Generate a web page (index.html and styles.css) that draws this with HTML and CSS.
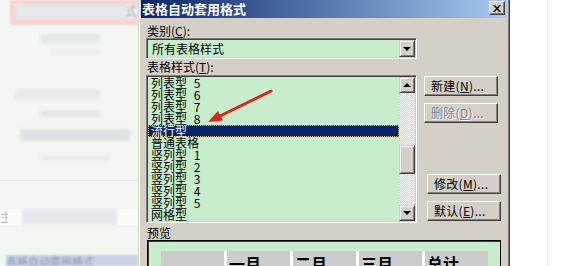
FILE: index.html
```html
<!DOCTYPE html>
<html lang="zh-CN">
<head>
<meta charset="utf-8">
<title>表格自动套用格式</title>
<link rel="stylesheet" href="styles.css">
</head>
<body>
<div class="page">
  <div class="backdrop">
    <div class="bd-toolbar"><div class="bd-toolbar-inner"><span class="bd-chip">式</span></div></div>
    <div class="bd-block b1"></div>
    <div class="bd-block b2"></div>
    <div class="bd-block b3"></div>
    <div class="bd-block b4"></div>
    <div class="bd-block b5"></div>
    <div class="bd-block b6"></div>
    <div class="bd-rule"></div>
    <div class="bd-textrow"><span class="bd-glyph">主</span><span class="bd-block b7"></span></div>
    <div class="bd-bottom">表格自动套用格式</div>
  </div>

  <div class="dialog">
    <div class="dialog-inner">
      <div class="titlebar">
        <span class="title">表格自动套用格式</span>
        <span class="close-btn">
          <svg width="8" height="7" viewBox="0 0 8 7"><path d="M0 0h2l2 2.5L6 0h2L5 3.5 8 7H6L4 4.5 2 7H0l3-3.5z" fill="#000"/></svg>
        </span>
      </div>
      <div class="content">
        <div class="row">
          <div class="main-col">
            <div class="label">类别(<u>C</u>):</div>
            <div class="combo">
              <span class="combo-text">所有表格样式</span>
              <span class="sb-btn arrow-down"></span>
            </div>
            <div class="label label-list">表格样式(<u>T</u>):</div>
            <div class="listbox">
              <ul class="items">
                <li>列表型 5</li>
                <li>列表型 6</li>
                <li>列表型 7</li>
                <li>列表型 8</li>
                <li class="selected">流行型</li>
                <li>普通表格</li>
                <li>竖列型 1</li>
                <li>竖列型 2</li>
                <li>竖列型 3</li>
                <li>竖列型 4</li>
                <li>竖列型 5</li>
                <li>网格型</li>
              </ul>
              <div class="scrollbar">
                <span class="sb-btn arrow-up"></span>
                <div class="track"><div class="thumb"></div></div>
                <span class="sb-btn arrow-down"></span>
              </div>
            </div>
          </div>
          <div class="btn-col">
            <div class="btn">新建(<u>N</u>)...</div>
            <div class="btn disabled">删除(<u>D</u>)...</div>
            <div class="btn shifted gap-big">修改(<u>M</u>)...</div>
            <div class="btn shifted">默认(<u>E</u>)...</div>
          </div>
        </div>
        <div class="label label-preview">预览</div>
        <div class="preview">
          <div class="pv-row">
            <div class="pv-cell"></div>
            <div class="pv-cell">一月</div>
            <div class="pv-cell">二月</div>
            <div class="pv-cell">三月</div>
            <div class="pv-cell">总计</div>
          </div>
        </div>
      </div>
    </div>
  </div>

  <div class="right-bg"><div class="right-rule"></div></div>
</div>

<svg class="annotation" width="566" height="266" viewBox="0 0 566 266">
  <line x1="271" y1="91" x2="220" y2="116" stroke="#e3211b" stroke-width="3" stroke-linecap="round"/>
  <polygon points="208,122 223,120.5 218,111" fill="#e3211b"/>
</svg>
</body>
</html>
```

FILE: styles.css
```css
html, body {
  margin: 0;
  padding: 0;
}
body {
  width: 566px;
  height: 266px;
  overflow: hidden;
  position: relative;
  font-family: "Noto Sans CJK SC", "Noto Sans", sans-serif;
  font-size: 12px;
  color: #000;
}
.page {
  display: flex;
  width: 566px;
  height: 266px;
  overflow: hidden;
}

/* ---------- blurred document behind ---------- */
.backdrop {
  width: 138px;
  flex: none;
  background: #f2f8f1;
  display: flex;
  flex-direction: column;
  overflow: hidden;
}
.bd-toolbar {
  margin-left: 10px;
  height: 26px;
  background: #f9d3d3;
  padding: 4px 1px 6px 6px;
  box-sizing: border-box;
  filter: blur(1px);
}
.bd-toolbar-inner {
  height: 100%;
  background: #e4e8e8;
  display: flex;
  justify-content: flex-end;
  align-items: center;
}
.bd-chip {
  color: #9aa2a2;
  font-size: 12px;
  line-height: 12px;
  background: #f4f4f4;
}
.bd-block {
  display: block;
  background: #e3e9e4;
  filter: blur(1.5px);
}
.b1 { margin: 9px 0 0 40px; width: 60px; height: 10px; }
.b2 { margin: 6px 0 0 50px; width: 50px; height: 6px; background: #e9eee9; }
.b3 { margin: 34px 0 0 15px; width: 85px; height: 12px; background: #e8ece9; }
.b4 { margin: 10px 0 0 40px; width: 60px; height: 8px; }
.b5 { margin: 12px 0 0 20px; width: 110px; height: 13px; background: #dfe3e4; }
.b6 { margin: 14px 0 0 40px; width: 70px; height: 6px; background: #e8ede8; }
.bd-rule {
  margin-top: 19px;
  height: 1px;
  background: #e4ebe4;
}
.bd-textrow {
  margin-top: 28px;
  display: flex;
  align-items: center;
  background: #fafcfa;
}
.bd-glyph {
  color: #b8bcbc;
  font-size: 12px;
  line-height: 14px;
  width: 8px;
  overflow: hidden;
  filter: blur(0.4px);
}
.b7 { margin-left: 14px; width: 95px; height: 16px; background: #e6e9ec; }
.bd-bottom {
  margin: 30px 0 0 6px;
  height: 12px;
  background: #c9d3e6;
  color: #8897b4;
  font-size: 11px;
  line-height: 12px;
  filter: blur(0.8px);
  white-space: nowrap;
  overflow: hidden;
}

/* ---------- dialog ---------- */
.dialog {
  width: 372px;
  flex: none;
  box-sizing: border-box;
  background: #d4d0c8;
  border-left: 1px solid #d4d0c8;
  border-right: 1px solid #404040;
}
.dialog-inner {
  height: 100%;
  box-sizing: border-box;
  border-left: 1px solid #fff;
  border-right: 1px solid #808080;
  padding: 0 1px;
}
.titlebar {
  height: 18px;
  background: linear-gradient(90deg, #0a246a 0%, #a6caf0 100%);
  display: flex;
  justify-content: space-between;
  align-items: flex-start;
  padding: 0 2px 0 1px;
}
.title {
  color: #fff;
  font-weight: 700;
  font-size: 13px;
  line-height: 17px;
}
.close-btn {
  margin-top: 1px;
  width: 16px;
  height: 14px;
  box-sizing: border-box;
  background: #d4d0c8;
  border: 1px solid;
  border-color: #fff #404040 #404040 #fff;
  box-shadow: inset -1px -1px 0 #808080;
  display: flex;
  align-items: center;
  justify-content: center;
  padding-right: 1px;
}

.content {
  padding-left: 5px;
}
.row {
  display: flex;
  margin-top: 6px;
}
.main-col {
  width: 271px;
  flex: none;
}
.label {
  height: 13px;
  line-height: 13px;
  padding-left: 1px;
  white-space: nowrap;
}
.label u, .btn u {
  text-underline-offset: 1px;
}

.combo {
  margin-top: 1px;
  height: 21px;
  box-sizing: border-box;
  border: 1px solid;
  border-color: #808080 #fff #fff #808080;
  box-shadow: inset 1px 1px 0 #404040, inset -1px -1px 0 #d4d0c8;
  background: #c7edcc;
  display: flex;
  align-items: center;
  padding: 1px;
}
.combo-text {
  flex: 1;
  padding-left: 4px;
  line-height: 17px;
}
.combo .sb-btn {
  height: 17px;
}

.label-list {
  margin-top: 1px;
}
.listbox {
  margin-top: 2px;
  height: 148px;
  box-sizing: border-box;
  border: 1px solid;
  border-color: #808080 #fff #fff #808080;
  box-shadow: inset 1px 1px 0 #404040, inset -1px -1px 0 #d4d0c8;
  background: #c7edcc;
  padding: 1px;
  display: flex;
}
.items {
  list-style: none;
  margin: 0;
  padding: 0;
  flex: 1;
}
.items li {
  height: 12px;
  line-height: 12px;
  padding-left: 3px;
  word-spacing: 4px;
  white-space: nowrap;
}
.items li.selected {
  background: #0a246a;
  color: #fff;
  outline: 1px dotted #d8c890;
  outline-offset: -1px;
}

.scrollbar {
  width: 16px;
  flex: none;
  display: flex;
  flex-direction: column;
}
.sb-btn {
  width: 16px;
  height: 16px;
  flex: none;
  box-sizing: border-box;
  background: #d4d0c8;
  border: 1px solid;
  border-color: #d4d0c8 #404040 #404040 #d4d0c8;
  box-shadow: inset 1px 1px 0 #fff, inset -1px -1px 0 #808080;
  display: flex;
  align-items: center;
  justify-content: center;
}
.sb-btn::after {
  content: "";
  width: 0;
  height: 0;
  border-left: 4px solid transparent;
  border-right: 4px solid transparent;
}
.arrow-down::after {
  border-top: 4px solid #000;
}
.arrow-up::after {
  border-bottom: 4px solid #000;
}
.track {
  flex: 1;
  background-color: #fff;
  background-image: repeating-conic-gradient(#d4d0c8 0 25%, #fff 0 50%);
  background-size: 2px 2px;
}
.thumb {
  margin-top: 52px;
  height: 29px;
  box-sizing: border-box;
  background: #d4d0c8;
  border: 1px solid;
  border-color: #d4d0c8 #404040 #404040 #d4d0c8;
  box-shadow: inset 1px 1px 0 #fff, inset -1px -1px 0 #808080;
}

.btn-col {
  margin-left: 7px;
  padding-top: 52px;
  display: flex;
  flex-direction: column;
  gap: 7px;
}
.btn {
  width: 74px;
  height: 20px;
  box-sizing: border-box;
  background: #d4d0c8;
  border: 1px solid;
  border-color: #fff #404040 #404040 #fff;
  box-shadow: inset -1px -1px 0 #808080;
  padding-left: 6px;
  line-height: 18px;
  white-space: nowrap;
  letter-spacing: 0.3px;
}
.btn.disabled {
  color: #808080;
  text-shadow: 1px 1px 0 #fff;
}
.btn.shifted {
  margin-left: 3px;
}
.btn.gap-big {
  margin-top: 44px;
}

.label-preview {
  margin-top: 3px;
}
.preview {
  margin: 1px 0 0 1px;
  width: 354px;
  height: 40px;
  box-sizing: border-box;
  border: 1px solid #000;
  box-shadow: inset 1px 1px 0 #404040;
  background: #c7edcc;
  padding: 10px 0 0 13px;
}
.pv-row {
  display: flex;
}
.pv-cell {
  width: 63px;
  height: 22px;
  background: #cccccc;
  font-weight: 700;
  font-size: 16px;
  line-height: 24px;
  padding-left: 2px;
  box-sizing: border-box;
}
.pv-cell + .pv-cell {
  width: 66px;
  border-left: 3px solid #fff;
}

/* ---------- right side ---------- */
.right-bg {
  flex: 1;
  background: #fff;
  display: flex;
}
.right-rule {
  margin-left: 37px;
  width: 1px;
  background: #f3f3f3;
}

/* annotation arrow over the screenshot */
.annotation {
  position: absolute;
  left: 0;
  top: 0;
  pointer-events: none;
}
```
